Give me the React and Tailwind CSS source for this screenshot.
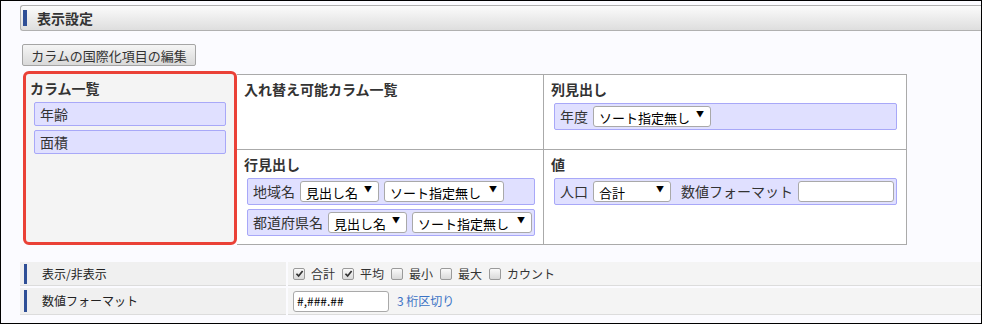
import React from "react";

const Sel = ({ className, children }) => (
  <div
    className={
      "h-[21px] border border-[#a9a9a9] rounded-[3px] bg-white flex items-center justify-between pl-[5px] pr-[6px] text-[13px] leading-none text-black shrink-0 " +
      className
    }
  >
    <span className="pt-[2px]">{children}</span>
    <span className="text-[8px] -mt-[6px]">▼</span>
  </div>
);

const Box = ({ className, children }) => (
  <div
    className={
      "h-[27px] bg-[#e0e0ff] border border-[#a8a8f8] rounded-[2px] flex items-center gap-[5px] pl-[5px] text-[14px] text-[#333] " +
      className
    }
  >
    {children}
  </div>
);

const Check = ({ checked, label }) => (
  <div className="flex items-center gap-[6px]">
    <span className="w-[12px] h-[12px] border border-[#9a9a9a] rounded-[2px] bg-linear-to-b from-[#fafafa] to-[#d9d9d9] flex items-center justify-center">
      {checked && (
        <svg viewBox="0 0 10 10" className="w-[9px] h-[9px]">
          <path d="M1.6 5.3 L4 7.7 L8.5 2.2" stroke="#333" strokeWidth="1.9" fill="none" />
        </svg>
      )}
    </span>
    <span className="text-[12px] text-[#333]">{label}</span>
  </div>
);

export default function App() {
  return (
    <div
      className="w-[982px] h-[324px] border border-black bg-[#fbfbff] overflow-hidden flex flex-col"
      style={{ fontFamily: '"Noto Sans CJK JP", "Noto Sans", sans-serif' }}
    >
      {/* header */}
      <div className="ml-[19px] mt-[4px] h-[26px] rounded-l-[3px] border border-r-0 border-[#b0b0b0] bg-linear-to-b from-[#fbfbfb] to-[#dedede] flex items-center">
        <div className="ml-[2px] w-[4px] h-[16px] bg-[#2f4f96]" />
        <span className="ml-[10px] text-[14px] font-bold text-[#333] leading-none">表示設定</span>
      </div>

      {/* button */}
      <div className="ml-[21px] mt-[13px] w-[174px] h-[22px] border border-[#a5a5a5] rounded-[2px] bg-linear-to-b from-[#f5f5f5] to-[#d9d9d9] flex items-center justify-center text-[13px] text-[#333] leading-none">
        カラムの国際化項目の編集
      </div>

      {/* main */}
      <div className="ml-[22px] mt-[5px] flex items-end">
        <div className="w-[214px] h-[174px] border-[3px] border-[#ea4137] rounded-[6px] bg-[#f4f4f4] pt-[4px] pl-[4px]">
          <div className="text-[14px] font-bold text-[#333] leading-[20px]">カラム一覧</div>
          <div className="mt-[4px] ml-[4px] flex flex-col gap-[4px]">
            <div className="w-[192px] h-[24px] bg-[#e0e0ff] border border-[#a8a8f8] rounded-[2px] pl-[5px] flex items-center text-[14px] text-[#333]">年齢</div>
            <div className="w-[192px] h-[24px] bg-[#e0e0ff] border border-[#a8a8f8] rounded-[2px] pl-[5px] flex items-center text-[14px] text-[#333]">面積</div>
          </div>
        </div>
        <div className="w-[670px] h-[171px] border border-l-0 border-[#aaa] bg-white grid grid-cols-[307px_362px] grid-rows-[75px_95px]">
          <div className="border-r border-b border-[#aaa] pl-[7px] pt-[4px]">
            <div className="text-[14px] font-bold text-[#333] leading-[20px]">入れ替え可能カラム一覧</div>
          </div>
          <div className="border-b border-[#aaa] pl-[7px] pt-[4px]">
            <div className="text-[14px] font-bold text-[#333] leading-[20px]">列見出し</div>
            <Box className="mt-[4px] ml-[3px] w-[343px]">
              <span>年度</span>
              <Sel className="w-[118px]">ソート指定無し</Sel>
            </Box>
          </div>
          <div className="border-r border-[#aaa] pl-[7px] pt-[4px]">
            <div className="text-[14px] font-bold text-[#333] leading-[20px]">行見出し</div>
            <div className="mt-[4px] ml-[3px] flex flex-col gap-[4px]">
              <Box className="w-[288px]">
                <span>地域名</span>
                <Sel className="w-[79px]">見出し名</Sel>
                <Sel className="w-[120px]">ソート指定無し</Sel>
              </Box>
              <Box className="w-[288px]">
                <span>都道府県名</span>
                <Sel className="w-[79px]">見出し名</Sel>
                <Sel className="w-[120px]">ソート指定無し</Sel>
              </Box>
            </div>
          </div>
          <div className="pl-[7px] pt-[4px]">
            <div className="text-[14px] font-bold text-[#333] leading-[20px]">値</div>
            <Box className="mt-[4px] ml-[3px] w-[343px]">
              <span>人口</span>
              <Sel className="w-[78px]">合計</Sel>
              <span className="ml-[5px]">数値フォーマット</span>
              <div className="w-[96px] h-[21px] border border-[#a9a9a9] rounded-[3px] bg-white" />
            </Box>
          </div>
        </div>
      </div>

      {/* bottom rows */}
      <div className="ml-[19px] mt-[17px] flex flex-col gap-[2px]">
        <div className="flex gap-[2px] h-[24px]">
          <div className="w-[266px] bg-[#f0f0f0] border-b border-[#dcdcdc] flex items-center">
            <div className="ml-[4px] w-[3px] h-[20px] bg-[#2f4f96]" />
            <span className="ml-[15px] text-[12px] text-[#222]">表示/非表示</span>
          </div>
          <div className="flex-1 bg-[#f4f4f4] border-b border-[#dcdcdc] flex items-center pl-[5px] gap-[7px]">
            <Check checked label="合計" />
            <Check checked label="平均" />
            <Check label="最小" />
            <Check label="最大" />
            <Check label="カウント" />
          </div>
        </div>
        <div className="flex gap-[2px] h-[27px]">
          <div className="w-[266px] bg-[#f0f0f0] border-b border-[#dcdcdc] flex items-center">
            <div className="ml-[4px] w-[3px] h-[22px] bg-[#2f4f96]" />
            <span className="ml-[15px] text-[12px] text-[#222]">数値フォーマット</span>
          </div>
          <div className="flex-1 bg-[#f4f4f4] border-b border-[#dcdcdc] flex items-center pl-[5px]">
            <div className="w-[96px] h-[21px] border border-[#a9a9a9] rounded-[3px] bg-white flex items-center pl-[3px] text-[12px] text-black">#,###.##</div>
            <span className="ml-[8px] text-[12px] text-[#3a72c4]">3 桁区切り</span>
          </div>
        </div>
      </div>
    </div>
  );
}
